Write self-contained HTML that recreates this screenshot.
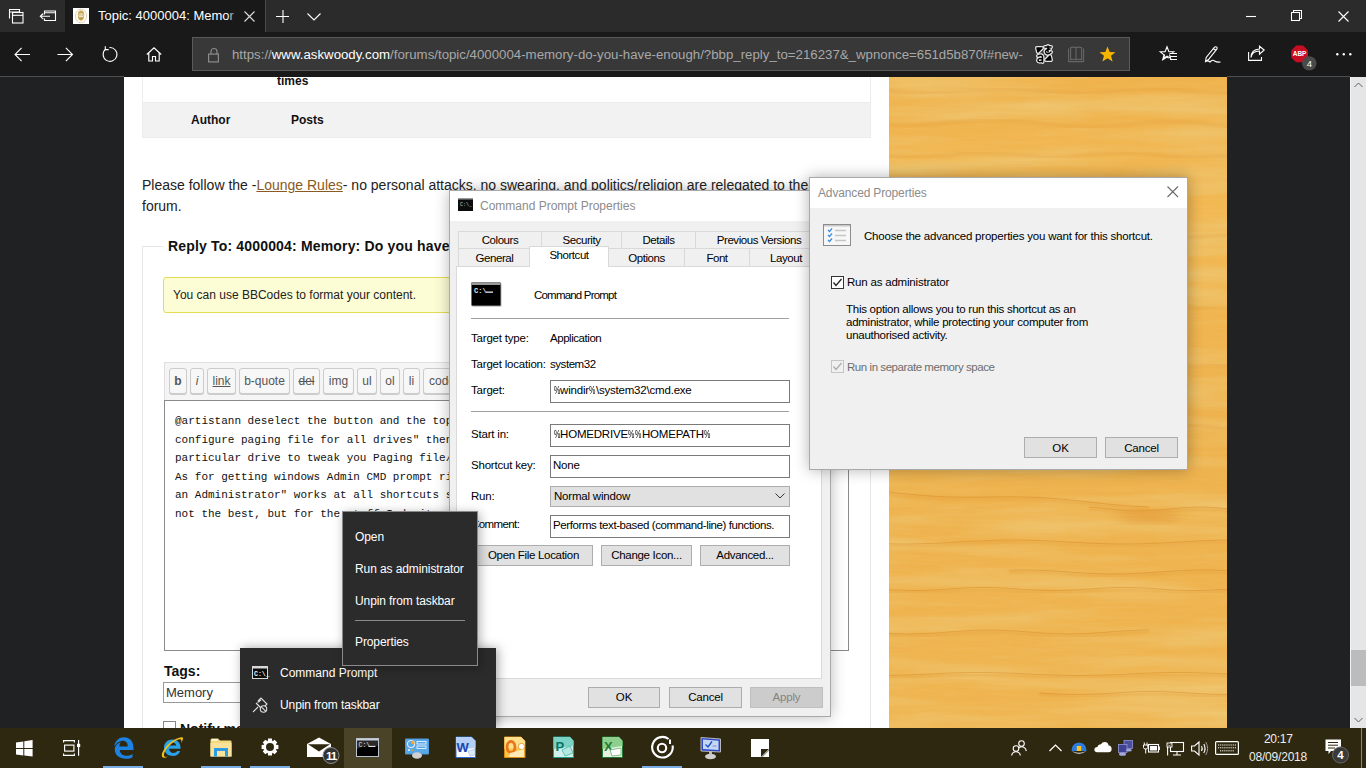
<!DOCTYPE html>
<html><head><meta charset="utf-8">
<style>
*{box-sizing:border-box;margin:0;padding:0}
html,body{width:1366px;height:768px;overflow:hidden;background:#202123;font-family:"Liberation Sans",sans-serif}
.a{position:absolute}
.t{position:absolute;white-space:pre;line-height:1}
svg{position:absolute;overflow:visible}
</style></head><body>

<!-- ===== TAB STRIP ===== -->
<div class="a" style="left:0;top:0;width:1366px;height:32px;background:#2b2b2b"></div>
<div class="a" style="left:65px;top:0;width:200px;height:32px;background:#191919"></div>
<div class="a" style="left:265px;top:0;width:1px;height:32px;background:#4a4a4a"></div>

<!-- ===== TOOLBAR ===== -->
<div class="a" style="left:0;top:32px;width:1366px;height:45px;background:#191919"></div>
<div class="a" style="left:192px;top:37px;width:938px;height:34px;background:#383838;border:1px solid #5a5a5a"></div>


<!-- chrome icons -->
<svg style="left:8px;top:8px" width="17" height="17"><path d="M1.5 10.5 V1.5 H11.5 V4.5 M1.5 4 H11.5" fill="none" stroke="#fff" stroke-width="1.1"/><rect x="4.5" y="4.5" width="10.5" height="10.5" fill="none" stroke="#fff" stroke-width="1.1"/><path d="M4.5 7.3 H15" stroke="#fff" stroke-width="1.1"/></svg>
<svg style="left:39px;top:10px" width="18" height="12"><path d="M5.5 4.5 V1 H16.5 V10.5 H5.5 V8.5 M5.5 2.8 H16.5" fill="none" stroke="#fff" stroke-width="1.1"/><path d="M11 6.3 H1.5 M4.3 3.5 L1.3 6.3 L4.3 9.1" fill="none" stroke="#fff" stroke-width="1.1"/></svg>
<div class="a" style="left:73px;top:8px;width:16px;height:16px;background:#fff"></div>
<svg style="left:73px;top:8px" width="16" height="16"><ellipse cx="8" cy="8" rx="5.6" ry="6.8" fill="none" stroke="#d2bf8e" stroke-width="0.7"/><path d="M4.8 6.5 Q5 2.8 8 2.6 Q11 2.8 11.2 6.5 Q11.3 10 10 11.8 Q8 13.8 6 11.8 Q4.7 10 4.8 6.5 Z" fill="#c9a652"/><path d="M5.5 6 Q8 4.5 10.5 6 V8.5 Q8 10.5 5.5 8.5 Z" fill="#efe2bd"/><path d="M6.3 7 h1.2 M8.6 7 h1.2 M7 10.2 h2" stroke="#9c7a2a" stroke-width="0.7"/></svg>
<div class="t" style="left:98px;top:9px;font-size:13px;color:#fff">Topic: 4000004: Memor</div>
<div class="a" style="left:227px;top:4px;width:12px;height:24px;background:linear-gradient(to right,rgba(25,25,25,0),#191919)"></div>
<svg style="left:244px;top:11px" width="11" height="11"><path d="M0.5 0.5 L10.5 10.5 M10.5 0.5 L0.5 10.5" stroke="#ddd" stroke-width="1.1"/></svg>
<svg style="left:276px;top:10px" width="14" height="14"><path d="M7 0 V13 M0 6.5 H13" stroke="#fff" stroke-width="1.1"/></svg>
<svg style="left:307px;top:13px" width="15" height="8"><polyline points="0.5,0.5 7,7 13.5,0.5" fill="none" stroke="#fff" stroke-width="1.1"/></svg>
<svg style="left:1246px;top:16px" width="11" height="2"><path d="M0 0.5 H10" stroke="#fff" stroke-width="1.1"/></svg>
<svg style="left:1291px;top:10px" width="12" height="12"><rect x="0.5" y="2.5" width="8" height="8" fill="none" stroke="#fff" stroke-width="1.05"/><path d="M2.5 2.5 V0.5 H10.5 V8.5 H8.5" fill="none" stroke="#fff" stroke-width="1.05"/></svg>
<svg style="left:1338px;top:11px" width="11" height="11"><path d="M0.5 0.5 L10.5 10.5 M10.5 0.5 L0.5 10.5" stroke="#fff" stroke-width="1.1"/></svg>

<svg style="left:14px;top:47px" width="17" height="16"><path d="M1 7.5 H16 M7.6 0.8 L1 7.5 L7.6 14.2" fill="none" stroke="#fff" stroke-width="1.1"/></svg>
<svg style="left:57px;top:47px" width="17" height="16"><path d="M0.5 7.5 H15.5 M8.9 0.8 L15.5 7.5 L8.9 14.2" fill="none" stroke="#fff" stroke-width="1.1"/></svg>
<svg style="left:102px;top:46px" width="17" height="17"><path d="M3.6 3.2 A6.9 6.9 0 1 0 7.5 1.6" fill="none" stroke="#fff" stroke-width="1.1"/><path d="M3.3 0.2 V3.6 H6.7" fill="none" stroke="#fff" stroke-width="1.1"/></svg>
<svg style="left:146px;top:47px" width="16" height="15"><path d="M0.8 7.5 L8 0.8 L15.2 7.5 M2.8 5.8 V14 H6.5 V9.5 H9.5 V14 H13.2 V5.8" fill="none" stroke="#fff" stroke-width="1.15"/></svg>

<svg style="left:208px;top:47px" width="12" height="16"><path d="M3 7 V4.5 A3 3 0 0 1 9 4.5 V7" fill="none" stroke="#8c8c8c" stroke-width="1.2"/><rect x="0.6" y="7.1" width="9.8" height="7.8" fill="none" stroke="#8c8c8c" stroke-width="1.2"/></svg>
<div class="t" style="left:232px;top:48px;font-size:13.25px;color:#a8a8a8">https://<span style="color:#fff">www.askwoody.com</span>/forums/topic/4000004-memory-do-you-have-enough/?bbp_reply_to=216237&amp;_wpnonce=651d5b870f#new-</div>

<svg style="left:1034px;top:44px" width="21" height="21"><g stroke="#e4e4e4" stroke-width="4" stroke-linejoin="round" stroke-linecap="round" fill="none">
<path d="M3 4 L8 4 L4 8 Z"/><path d="M17 16 L12 16 L16 12 Z"/><path d="M11 3 H17 M14 2 V8 M16 5 Q10 6 12 9 Q14 11 17 8"/><path d="M4 12 Q8 10 8.5 13 V18 M8.5 15 Q4 13.5 4 16.5 Q4.5 18.5 8.5 17"/></g>
<g stroke="#000" stroke-width="1.5" stroke-linejoin="round" stroke-linecap="round" fill="none">
<path d="M3 4 L8 4 L4 8 Z" fill="#000"/><path d="M17 16 L12 16 L16 12 Z" fill="#000"/><path d="M11 3 H17 M14 2 V8 M16 5 Q10 6 12 9 Q14 11 17 8"/><path d="M4 12 Q8 10 8.5 13 V18 M8.5 15 Q4 13.5 4 16.5 Q4.5 18.5 8.5 17"/></g></svg>
<svg style="left:1068px;top:46px" width="17" height="17"><path d="M0.6 2.5 V15.6 H15.6 V2.5" fill="none" stroke="#666" stroke-width="1.1"/><path d="M2.6 1.6 Q5.5 0.6 8 1.6 V13.6 Q5.5 12.8 2.6 13.6 Z M13.6 1.6 Q10.5 0.6 8 1.6 V13.6 Q10.5 12.8 13.6 13.6 Z" fill="none" stroke="#666" stroke-width="1.1"/></svg>
<svg style="left:1099px;top:46px" width="17" height="17"><path d="M8.5 0.5 L10.7 6 L16.5 6.2 L12 9.8 L13.6 15.6 L8.5 12.3 L3.4 15.6 L5 9.8 L0.5 6.2 L6.3 6 Z" fill="#f6b500"/></svg>

<svg style="left:1160px;top:46px" width="18" height="17"><path d="M7 0.8 L8.9 5.6 L13.8 5.8 L10 8.9 L11.3 13.8 L7 11 L2.7 13.8 L4 8.9 L0.2 5.8 L5.1 5.6 Z" fill="none" stroke="#fff" stroke-width="1.1"/><rect x="8.5" y="6.8" width="9.5" height="8" fill="#191919"/><path d="M9.5 7.5 H17 M10 10.5 H17 M10 13.5 H17" stroke="#fff" stroke-width="1.1"/><path d="M9.5 8.5 L10.6 12.3 L7 10.1 L3.6 12.3 L4.6 8.6" fill="none" stroke="#fff" stroke-width="1.1"/></svg>
<svg style="left:1204px;top:46px" width="17" height="18"><path d="M1.5 15.5 L2.2 11.5 L10.5 1.2 Q11.8 0.2 12.8 1.2 Q13.6 2.2 12.8 3.2 L4.5 13.5 Z M9.5 2.5 L11.8 4.5 M1.5 15.5 Q4 14 6 16 Q9 13 10.5 15 Q13 16.5 16.5 16" fill="none" stroke="#fff" stroke-width="1.1"/></svg>
<svg style="left:1248px;top:46px" width="17" height="15"><path d="M0.6 6 V14.4 H13.5 V11 M3 11.5 Q4 5 11.5 5 V8.2 L16.2 4 L11.5 0.2 V3 Q3 3.5 3 11.5 Z" fill="none" stroke="#fff" stroke-width="1.1"/></svg>
<svg style="left:1291px;top:45px" width="26" height="26"><path d="M5.1 0.5 H12.1 L17 5.4 V12.4 L12.1 17.3 H5.1 L0.2 12.4 V5.4 Z" fill="#c80e23"/><text x="8.6" y="11.3" font-family="Liberation Sans" font-size="6.5" font-weight="bold" fill="#fff" text-anchor="middle">ABP</text><circle cx="18.3" cy="18.4" r="7.2" fill="#4a4a4a"/><text x="18.3" y="21.8" font-family="Liberation Sans" font-size="9.5" fill="#fff" text-anchor="middle">4</text></svg>
<svg style="left:1336px;top:53px" width="17" height="3"><circle cx="1.3" cy="1.3" r="1.2" fill="#fff"/><circle cx="7.8" cy="1.3" r="1.2" fill="#fff"/><circle cx="14.3" cy="1.3" r="1.2" fill="#fff"/></svg>

<!-- ===== PAGE ===== -->
<div class="a" style="left:0;top:77px;width:1366px;height:651px;background:#202123"></div>
<div class="a" style="left:124px;top:77px;width:765px;height:651px;background:#fff"></div>
<div class="a" style="left:0;top:76px;width:124px;height:1px;background:#4e4e4e"></div><div class="a" style="left:1227px;top:76px;width:123px;height:1px;background:#4e4e4e"></div>
<svg style="left:889px;top:77px;overflow:hidden" width="338" height="651"><defs>
<filter id="wf" x="0" y="0" width="100%" height="100%"><feTurbulence type="fractalNoise" baseFrequency="0.005 0.05" numOctaves="4" seed="11"/><feColorMatrix type="matrix" values="0 0 0 0 0.86  0 0 0 0 0.55  0 0 0 0 0.15  2.2 0 0 0 -0.85"/></filter>
<filter id="wf2" x="0" y="0" width="100%" height="100%"><feTurbulence type="fractalNoise" baseFrequency="0.01 0.2" numOctaves="2" seed="3"/><feColorMatrix type="matrix" values="0 0 0 0 0.97  0 0 0 0 0.76  0 0 0 0 0.38  0 2.2 0 0 -1.1"/></filter>
<filter id="wf3" x="0" y="0" width="100%" height="100%"><feTurbulence type="fractalNoise" baseFrequency="0.04 0.6" numOctaves="2" seed="21"/><feColorMatrix type="matrix" values="0 0 0 0 0.85  0 0 0 0 0.55  0 0 0 0 0.2  1.6 0 0 0 -0.75"/></filter><filter id="wb0"><feGaussianBlur stdDeviation="0.35"/></filter><filter id="wb"><feGaussianBlur stdDeviation="1.2"/></filter><filter id="wb2"><feGaussianBlur stdDeviation="4"/></filter><linearGradient id="wg" x1="0" y1="0" x2="0" y2="1"><stop offset="0" stop-color="#efb24c"/><stop offset="0.2" stop-color="#f2b852"/><stop offset="0.5" stop-color="#eeb24d"/><stop offset="1" stop-color="#efb44f"/></linearGradient></defs>
<rect width="338" height="652" fill="url(#wg)"/>
<rect width="338" height="652" filter="url(#wf)"/>
<rect width="338" height="652" filter="url(#wf2)" opacity="0.08"/><rect width="338" height="652" filter="url(#wf3)" opacity="0.35"/><path d="M0 14.0 L10 14.8 L20 15.5 L30 15.9 L40 16.0 L50 15.7 L60 15.2 L70 14.4 L80 13.6 L90 12.8 L100 12.3 L110 12.0 L120 12.1 L130 12.5 L140 13.2 L150 14.0 L160 14.8 L170 15.5 L180 15.9 L190 16.0 L200 15.7 L210 15.2 L220 14.4 L230 13.6 L240 12.8 L250 12.3 L260 12.0 L270 12.1 L280 12.5 L290 13.2 L300 14.0 L310 14.8 L320 15.5 L330 15.9 L340 16.0" fill="none" stroke="#dc9330" stroke-width="4" opacity="0.2" filter="url(#wb)"/><path d="M0 47.6 L10 48.1 L20 48.2 L30 47.9 L40 47.3 L50 46.5 L60 45.6 L70 44.7 L80 43.9 L90 43.3 L100 43.0 L110 43.1 L120 43.6 L130 44.4 L140 45.4 L150 46.5 L160 47.6 L170 48.6 L180 49.4 L190 49.9 L200 50.0 L210 49.7 L220 49.1 L230 48.3 L240 47.4 L250 46.5 L260 45.7 L270 45.1 L280 44.8 L290 44.9 L300 45.4 L310 46.2 L320 47.2 L330 48.3 L340 49.4" fill="none" stroke="#dc9330" stroke-width="4" opacity="0.2" filter="url(#wb)"/><path d="M0 78.9 L10 79.6 L20 79.9 L30 79.9 L40 79.6 L50 78.9 L60 78.0 L70 77.1 L80 76.4 L90 76.1 L100 76.1 L110 76.4 L120 77.1 L130 78.0 L140 78.9 L150 79.6 L160 79.9 L170 79.9 L180 79.6 L190 78.9 L200 78.0 L210 77.1 L220 76.4 L230 76.1 L240 76.1 L250 76.4 L260 77.1 L270 78.0 L280 78.9 L290 79.6 L300 79.9 L310 79.9 L320 79.6 L330 78.9 L340 78.0" fill="none" stroke="#dc9330" stroke-width="4" opacity="0.2" filter="url(#wb)"/><path d="M0 160.0 L10 160.6 L20 161.2 L30 161.6 L40 161.9 L50 162.0 L60 161.9 L70 161.6 L80 161.2 L90 160.6 L100 160.0 L110 159.4 L120 158.8 L130 158.4 L140 158.1 L150 158.0 L160 158.1 L170 158.4 L180 158.8 L190 159.4 L200 160.0 L210 160.6 L220 161.2 L230 161.6 L240 161.9 L250 162.0 L260 161.9 L270 161.6 L280 161.2 L290 160.6 L300 160.0 L310 159.4 L320 158.8 L330 158.4 L340 158.1" fill="none" stroke="#dc9330" stroke-width="4" opacity="0.2" filter="url(#wb)"/><path d="M0 232.0 L10 231.9 L20 231.6 L30 231.1 L40 230.4 L50 229.6 L60 228.9 L70 228.4 L80 228.1 L90 228.0 L100 228.2 L110 228.7 L120 229.3 L130 230.0 L140 230.7 L150 231.3 L160 231.8 L170 232.0 L180 231.9 L190 231.6 L200 231.1 L210 230.4 L220 229.6 L230 228.9 L240 228.4 L250 228.1 L260 228.0 L270 228.2 L280 228.7 L290 229.3 L300 230.0 L310 230.7 L320 231.3 L330 231.8 L340 232.0" fill="none" stroke="#dc9330" stroke-width="4" opacity="0.2" filter="url(#wb)"/><path d="M0 291.2 L10 291.7 L20 291.9 L30 292.0 L40 291.8 L50 291.5 L60 291.0 L70 290.3 L80 289.7 L90 289.0 L100 288.5 L110 288.2 L120 288.0 L130 288.1 L140 288.3 L150 288.8 L160 289.4 L170 290.0 L180 290.6 L190 291.2 L200 291.7 L210 291.9 L220 292.0 L230 291.8 L240 291.5 L250 291.0 L260 290.3 L270 289.7 L280 289.0 L290 288.5 L300 288.2 L310 288.0 L320 288.1 L330 288.3 L340 288.8" fill="none" stroke="#dc9330" stroke-width="4" opacity="0.2" filter="url(#wb)"/><path d="M0 350.0 L10 350.8 L20 351.4 L30 351.8 L40 352.0 L50 351.8 L60 351.4 L70 350.8 L80 350.0 L90 349.2 L100 348.6 L110 348.2 L120 348.0 L130 348.2 L140 348.6 L150 349.2 L160 350.0 L170 350.8 L180 351.4 L190 351.8 L200 352.0 L210 351.8 L220 351.4 L230 350.8 L240 350.0 L250 349.2 L260 348.6 L270 348.2 L280 348.0 L290 348.2 L300 348.6 L310 349.2 L320 350.0 L330 350.8 L340 351.4" fill="none" stroke="#dc9330" stroke-width="4" opacity="0.2" filter="url(#wb)"/><path d="M0 415.0 L10 416.1 L20 417.2 L30 418.1 L40 418.9 L50 419.5 L60 419.9 L70 420.1 L80 420.2 L90 420.1 L100 420.0 L110 419.9 L120 419.8 L130 419.9 L140 420.1 L150 420.5 L160 421.1 L170 421.9 L180 422.8 L190 423.9 L200 425.0 L210 426.1 L220 427.2 L230 428.1 L240 428.9 L250 429.5 L260 429.9" fill="none" stroke="#d2801f" stroke-width="1" opacity="0.4" filter="url(#wb0)"/><path d="M0 417.0 L10 418.1 L20 419.2 L30 420.1 L40 420.9 L50 421.5 L60 421.9 L70 422.1 L80 422.2 L90 422.1 L100 422.0 L110 421.9 L120 421.8 L130 421.9 L140 422.1 L150 422.5 L160 423.1 L170 423.9 L180 424.8 L190 425.9 L200 427.0 L210 428.1 L220 429.2 L230 430.1 L240 430.9 L250 431.5 L260 431.9" fill="none" stroke="#e09a35" stroke-width="3" opacity="0.3" filter="url(#wb)"/><path d="M200 430.3 L210 431.0 L220 432.0 L230 433.0 L240 433.7 L250 434.0 L260 433.7 L270 433.0 L280 432.0 L290 431.0 L300 430.3 L310 430.0 L320 430.3 L330 431.0 L340 432.0" fill="none" stroke="#d2801f" stroke-width="1" opacity="0.4" filter="url(#wb0)"/><path d="M200 432.3 L210 433.0 L220 434.0 L230 435.0 L240 435.7 L250 436.0 L260 435.7 L270 435.0 L280 434.0 L290 433.0 L300 432.3 L310 432.0 L320 432.3 L330 433.0 L340 434.0" fill="none" stroke="#e09a35" stroke-width="3" opacity="0.3" filter="url(#wb)"/><path d="M0 466.8 L10 467.0 L20 467.0 L30 466.8 L40 466.5 L50 466.1 L60 465.6 L70 465.0 L80 464.4 L90 463.9 L100 463.5 L110 463.2 L120 463.0 L130 463.0 L140 463.2 L150 463.5 L160 463.9 L170 464.4 L180 465.0 L190 465.6 L200 466.1 L210 466.5 L220 466.8 L230 467.0 L240 467.0 L250 466.8 L260 466.5 L270 466.1 L280 465.6 L290 465.0 L300 464.4 L310 463.9 L320 463.5 L330 463.2 L340 463.0" fill="none" stroke="#d2801f" stroke-width="1" opacity="0.4" filter="url(#wb0)"/><path d="M0 468.8 L10 469.0 L20 469.0 L30 468.8 L40 468.5 L50 468.1 L60 467.6 L70 467.0 L80 466.4 L90 465.9 L100 465.5 L110 465.2 L120 465.0 L130 465.0 L140 465.2 L150 465.5 L160 465.9 L170 466.4 L180 467.0 L190 467.6 L200 468.1 L210 468.5 L220 468.8 L230 469.0 L240 469.0 L250 468.8 L260 468.5 L270 468.1 L280 467.6 L290 467.0 L300 466.4 L310 465.9 L320 465.5 L330 465.2 L340 465.0" fill="none" stroke="#e09a35" stroke-width="3" opacity="0.3" filter="url(#wb)"/><path d="M120 493.3 L130 493.0 L140 493.0 L150 493.3 L160 493.7 L170 494.3 L180 495.0 L190 495.7 L200 496.3 L210 496.7 L220 497.0 L230 497.0 L240 496.7 L250 496.3 L260 495.7 L270 495.0 L280 494.3 L290 493.7 L300 493.3 L310 493.0 L320 493.0 L330 493.3 L340 493.7" fill="none" stroke="#d2801f" stroke-width="1" opacity="0.4" filter="url(#wb0)"/><path d="M120 495.3 L130 495.0 L140 495.0 L150 495.3 L160 495.7 L170 496.3 L180 497.0 L190 497.7 L200 498.3 L210 498.7 L220 499.0 L230 499.0 L240 498.7 L250 498.3 L260 497.7 L270 497.0 L280 496.3 L290 495.7 L300 495.3 L310 495.0 L320 495.0 L330 495.3 L340 495.7" fill="none" stroke="#e09a35" stroke-width="3" opacity="0.3" filter="url(#wb)"/><path d="M0 556.4 L10 556.8 L20 557.0 L30 556.8 L40 556.4 L50 555.8 L60 555.0 L70 554.2 L80 553.6 L90 553.2 L100 553.0 L110 553.2 L120 553.6 L130 554.2 L140 555.0 L150 555.8 L160 556.4 L170 556.8 L180 557.0 L190 556.8 L200 556.4 L210 555.8 L220 555.0 L230 554.2 L240 553.6 L250 553.2 L260 553.0" fill="none" stroke="#d2801f" stroke-width="1" opacity="0.4" filter="url(#wb0)"/><path d="M0 558.4 L10 558.8 L20 559.0 L30 558.8 L40 558.4 L50 557.8 L60 557.0 L70 556.2 L80 555.6 L90 555.2 L100 555.0 L110 555.2 L120 555.6 L130 556.2 L140 557.0 L150 557.8 L160 558.4 L170 558.8 L180 559.0 L190 558.8 L200 558.4 L210 557.8 L220 557.0 L230 556.2 L240 555.6 L250 555.2 L260 555.0" fill="none" stroke="#e09a35" stroke-width="3" opacity="0.3" filter="url(#wb)"/><path d="M0 598.4 L10 598.2 L20 597.9 L30 597.5 L40 597.0 L50 596.5 L60 596.1 L70 595.8 L80 595.6 L90 595.5 L100 595.6 L110 595.8 L120 596.1 L130 596.5 L140 597.0 L150 597.5 L160 597.9 L170 598.2 L180 598.4 L190 598.5 L200 598.4 L210 598.2 L220 597.9 L230 597.5 L240 597.0 L250 596.5 L260 596.1 L270 595.8 L280 595.6 L290 595.5 L300 595.6 L310 595.8 L320 596.1 L330 596.5 L340 597.0" fill="none" stroke="#d2801f" stroke-width="1" opacity="0.4" filter="url(#wb0)"/><path d="M0 600.4 L10 600.2 L20 599.9 L30 599.5 L40 599.0 L50 598.5 L60 598.1 L70 597.8 L80 597.6 L90 597.5 L100 597.6 L110 597.8 L120 598.1 L130 598.5 L140 599.0 L150 599.5 L160 599.9 L170 600.2 L180 600.4 L190 600.5 L200 600.4 L210 600.2 L220 599.9 L230 599.5 L240 599.0 L250 598.5 L260 598.1 L270 597.8 L280 597.6 L290 597.5 L300 597.6 L310 597.8 L320 598.1 L330 598.5 L340 599.0" fill="none" stroke="#e09a35" stroke-width="3" opacity="0.3" filter="url(#wb)"/><path d="M150 616.0 L160 616.6 L170 617.1 L180 617.4 L190 617.5 L200 617.3 L210 616.9 L220 616.3 L230 615.7 L240 615.1 L250 614.7 L260 614.5 L270 614.6 L280 614.9 L290 615.4 L300 616.0 L310 616.6 L320 617.1 L330 617.4 L340 617.5" fill="none" stroke="#d2801f" stroke-width="1" opacity="0.4" filter="url(#wb0)"/><path d="M150 618.0 L160 618.6 L170 619.1 L180 619.4 L190 619.5 L200 619.3 L210 618.9 L220 618.3 L230 617.7 L240 617.1 L250 616.7 L260 616.5 L270 616.6 L280 616.9 L290 617.4 L300 618.0 L310 618.6 L320 619.1 L330 619.4 L340 619.5" fill="none" stroke="#e09a35" stroke-width="3" opacity="0.3" filter="url(#wb)"/><path d="M0 512.7 L10 513.2 L20 513.5 L30 513.5 L40 513.2 L50 512.7 L60 512.0 L70 511.3 L80 510.8 L90 510.5 L100 510.5 L110 510.8 L120 511.3 L130 512.0 L140 512.7 L150 513.2 L160 513.5 L170 513.5 L180 513.2 L190 512.7 L200 512.0 L210 511.3 L220 510.8 L230 510.5 L240 510.5 L250 510.8 L260 511.3 L270 512.0 L280 512.7 L290 513.2 L300 513.5 L310 513.5 L320 513.2 L330 512.7 L340 512.0" fill="none" stroke="#d2801f" stroke-width="1" opacity="0.4" filter="url(#wb0)"/><path d="M0 514.7 L10 515.2 L20 515.5 L30 515.5 L40 515.2 L50 514.7 L60 514.0 L70 513.3 L80 512.8 L90 512.5 L100 512.5 L110 512.8 L120 513.3 L130 514.0 L140 514.7 L150 515.2 L160 515.5 L170 515.5 L180 515.2 L190 514.7 L200 514.0 L210 513.3 L220 512.8 L230 512.5 L240 512.5 L250 512.8 L260 513.3 L270 514.0 L280 514.7 L290 515.2 L300 515.5 L310 515.5 L320 515.2 L330 514.7 L340 514.0" fill="none" stroke="#e09a35" stroke-width="3" opacity="0.3" filter="url(#wb)"/><ellipse cx="260" cy="440" rx="32" ry="6" fill="#d98a2a" opacity="0.35" filter="url(#wb2)"/>
</svg>
<div class="a" style="left:1350px;top:77px;width:16px;height:651px;background:#e6e6e6;border-left:1px solid #f4f4f4"></div>
<svg style="left:1354px;top:82px" width="9" height="6"><polyline points="0.5,5 4.5,1 8.5,5" fill="none" stroke="#606060" stroke-width="1"/></svg>
<div class="a" style="left:1351px;top:650px;width:15px;height:36px;background:#bcbcbc"></div>
<svg style="left:1354px;top:717px" width="9" height="6"><polyline points="0.5,1 4.5,5 8.5,1" fill="none" stroke="#606060" stroke-width="1"/></svg>


<!-- page content -->
<div class="t" style="left:277px;top:75px;font-size:12px;font-weight:bold;color:#111">times</div>
<div class="a" style="left:142px;top:77px;width:729px;height:25px;border:1px solid #ededed;border-top:none;border-bottom:none"></div>
<div class="a" style="left:142px;top:102px;width:729px;height:36px;background:#f2f2f2;border:1px solid #ececec"></div>
<div class="t" style="left:191px;top:114px;font-size:12px;font-weight:bold;color:#111">Author</div>
<div class="t" style="left:291px;top:114px;font-size:12px;font-weight:bold;color:#111">Posts</div>

<div class="t" style="left:142px;top:175px;font-size:14px;color:#222;line-height:21px">Please follow the -<span style="color:#8a5a22;text-decoration:underline">Lounge Rules</span>- no personal attacks, no swearing, and politics/religion are relegated to the
forum.</div>

<div class="a" style="left:142px;top:246px;width:729px;height:482px;border:1px solid #e6e6e6;border-bottom:none"></div>
<div class="a" style="left:163px;top:236px;width:295px;height:20px;background:#fff"></div>
<div class="t" style="left:168px;top:239px;font-size:14px;font-weight:bold;color:#111;letter-spacing:0.17px">Reply To: 4000004: Memory: Do you have enough?</div>

<div class="a" style="left:163px;top:277px;width:700px;height:36px;background:#fdfdd5;border:1px solid #e6db55;border-radius:3px"></div>
<div class="t" style="left:173px;top:289px;font-size:12px;color:#222">You can use BBCodes to format your content.</div>

<!-- editor toolbar -->
<div class="a" style="left:164px;top:362px;width:684px;height:39px;background:#f5f5f5;border:1px solid #e0e0e0;border-bottom:none"></div>
<div class="a" style="left:169px;top:368px;width:18px;height:26px;background:#f7f7f7;border:1px solid #ccc;border-radius:3px;box-shadow:0 1px 0 #ccc;font-size:12px;color:#555;text-align:center;line-height:24px;font-weight:bold;">b</div>
<div class="a" style="left:190px;top:368px;width:14px;height:26px;background:#f7f7f7;border:1px solid #ccc;border-radius:3px;box-shadow:0 1px 0 #ccc;font-size:12px;color:#555;text-align:center;line-height:24px;font-style:italic;">i</div>
<div class="a" style="left:207px;top:368px;width:29px;height:26px;background:#f7f7f7;border:1px solid #ccc;border-radius:3px;box-shadow:0 1px 0 #ccc;font-size:12px;color:#555;text-align:center;line-height:24px;text-decoration:underline;">link</div>
<div class="a" style="left:239px;top:368px;width:51px;height:26px;background:#f7f7f7;border:1px solid #ccc;border-radius:3px;box-shadow:0 1px 0 #ccc;font-size:12px;color:#555;text-align:center;line-height:24px;">b-quote</div>
<div class="a" style="left:293px;top:368px;width:27px;height:26px;background:#f7f7f7;border:1px solid #ccc;border-radius:3px;box-shadow:0 1px 0 #ccc;font-size:12px;color:#555;text-align:center;line-height:24px;text-decoration:line-through;">del</div>
<div class="a" style="left:323px;top:368px;width:31px;height:26px;background:#f7f7f7;border:1px solid #ccc;border-radius:3px;box-shadow:0 1px 0 #ccc;font-size:12px;color:#555;text-align:center;line-height:24px;">img</div>
<div class="a" style="left:357px;top:368px;width:20px;height:26px;background:#f7f7f7;border:1px solid #ccc;border-radius:3px;box-shadow:0 1px 0 #ccc;font-size:12px;color:#555;text-align:center;line-height:24px;">ul</div>
<div class="a" style="left:380px;top:368px;width:20px;height:26px;background:#f7f7f7;border:1px solid #ccc;border-radius:3px;box-shadow:0 1px 0 #ccc;font-size:12px;color:#555;text-align:center;line-height:24px;">ol</div>
<div class="a" style="left:403px;top:368px;width:17px;height:26px;background:#f7f7f7;border:1px solid #ccc;border-radius:3px;box-shadow:0 1px 0 #ccc;font-size:12px;color:#555;text-align:center;line-height:24px;">li</div>
<div class="a" style="left:423px;top:368px;width:38px;height:26px;background:#f7f7f7;border:1px solid #ccc;border-radius:3px;box-shadow:0 1px 0 #ccc;font-size:12px;color:#555;text-align:center;line-height:24px;">code</div>
<div class="a" style="left:473px;top:368px;width:47px;height:26px;background:#f7f7f7;border:1px solid #ccc;border-radius:3px;box-shadow:0 1px 0 #ccc;font-size:12px;color:#555;text-align:center;line-height:24px;">close</div>

<!-- textarea -->
<div class="a" style="left:164px;top:400px;width:685px;height:251px;background:#fff;border:1px solid #8a8a8a"></div>
<div class="t" style="left:175px;top:412px;font-family:'Liberation Mono',monospace;font-size:11px;line-height:18.6px;color:#111">@artistann deselect the button and the top "Automatically manage
configure paging file for all drives" then select the
particular drive to tweak you Paging file/
As for getting windows Admin CMD prompt right-click "Run as
an Administrator" works at all shortcuts so far
not the best, but for the stuff I do it works</div>

<div class="t" style="left:164px;top:664px;font-size:14px;font-weight:bold;color:#111">Tags:</div>
<div class="a" style="left:163px;top:682px;width:300px;height:21px;background:#fff;border:1px solid #999"></div>
<div class="t" style="left:166px;top:686px;font-size:13px;color:#333">Memory</div>
<div class="a" style="left:163px;top:721px;width:13px;height:13px;background:#fff;border:1px solid #888"></div>
<div class="t" style="left:180px;top:722px;font-size:14px;font-weight:bold;color:#111">Notify me of follow-up replies via email</div>


<!-- ===== CMD PROPERTIES DIALOG ===== -->
<div class="a" style="left:449px;top:190px;width:382px;height:527px;background:#f0f0f0;border:1px solid #a9a9a9;box-shadow:0 0 14px rgba(0,0,0,0.28)"></div>
<div class="a" style="left:450px;top:191px;width:380px;height:30px;background:#fff"></div>
<svg style="left:458px;top:198px" width="15" height="13"><rect x="0" y="0" width="15" height="13" fill="#0c0c0c"/><rect x="0" y="0" width="15" height="1.5" fill="#999"/><text x="2" y="8" font-family="Liberation Mono" font-size="5" fill="#ccc">C:\_</text></svg>
<div class="t" style="left:480px;top:200px;font-size:12px;color:#8c8c8c">Command Prompt Properties</div>

<!-- tab panel -->
<div class="a" style="left:456px;top:266px;width:366px;height:413px;background:#fff;border:1px solid #d9d9d9"></div>
<div class="a" style="left:458px;top:231px;width:84px;height:18px;background:#f0f0f0;border:1px solid #d9d9d9;font-size:11.5px;letter-spacing:-0.45px;color:#000;text-align:center;line-height:16px">Colours</div>
<div class="a" style="left:541px;top:231px;width:81px;height:18px;background:#f0f0f0;border:1px solid #d9d9d9;font-size:11.5px;letter-spacing:-0.45px;color:#000;text-align:center;line-height:16px">Security</div>
<div class="a" style="left:621px;top:231px;width:75px;height:18px;background:#f0f0f0;border:1px solid #d9d9d9;font-size:11.5px;letter-spacing:-0.45px;color:#000;text-align:center;line-height:16px">Details</div>
<div class="a" style="left:695px;top:231px;width:128px;height:18px;background:#f0f0f0;border:1px solid #d9d9d9;font-size:11.5px;letter-spacing:-0.45px;color:#000;text-align:center;line-height:16px">Previous Versions</div>
<div class="a" style="left:458px;top:248px;width:73px;height:19px;background:#f0f0f0;border:1px solid #d9d9d9;font-size:11.5px;letter-spacing:-0.45px;color:#000;text-align:center;line-height:19px">General</div>
<div class="a" style="left:608px;top:248px;width:77px;height:19px;background:#f0f0f0;border:1px solid #d9d9d9;font-size:11.5px;letter-spacing:-0.45px;color:#000;text-align:center;line-height:19px">Options</div>
<div class="a" style="left:684px;top:248px;width:66px;height:19px;background:#f0f0f0;border:1px solid #d9d9d9;font-size:11.5px;letter-spacing:-0.45px;color:#000;text-align:center;line-height:19px">Font</div>
<div class="a" style="left:749px;top:248px;width:74px;height:19px;background:#f0f0f0;border:1px solid #d9d9d9;font-size:11.5px;letter-spacing:-0.45px;color:#000;text-align:center;line-height:19px">Layout</div>
<div class="a" style="left:529px;top:246px;width:80px;height:21px;background:#fff;border:1px solid #d9d9d9;border-bottom:none;font-size:11.5px;letter-spacing:-0.45px;text-align:center;line-height:17px;color:#000">Shortcut</div>

<svg style="left:471px;top:282px" width="31" height="25"><defs><filter id="sh" x="-20%" y="-20%" width="140%" height="140%"><feDropShadow dx="0.6" dy="0.8" stdDeviation="0.7" flood-opacity="0.5"/></filter></defs><rect x="0.5" y="0.5" width="29" height="23" fill="#050505" filter="url(#sh)"/><rect x="0.5" y="0.5" width="29" height="2.5" fill="#9a9a9a"/><text x="3" y="11" font-family="Liberation Mono" font-size="7" font-weight="bold" fill="#e6e6e6">C:\</text><rect x="15" y="9.5" width="7" height="1.3" fill="#e6e6e6"/></svg>
<div class="t" style="left:534px;top:290px;font-size:11.5px;letter-spacing:-0.8px;color:#000">Command Prompt</div>
<div class="a" style="left:471px;top:318px;width:318px;height:1px;background:#a0a0a0"></div>
<div class="t" style="left:471px;top:333px;font-size:11.5px;letter-spacing:-0.2px;color:#000">Target type:</div>
<div class="t" style="left:550px;top:333px;font-size:11.5px;letter-spacing:-0.45px;color:#000">Application</div>
<div class="t" style="left:471px;top:359px;font-size:11.5px;letter-spacing:-0.2px;color:#000">Target location:</div>
<div class="t" style="left:550px;top:359px;font-size:11.5px;letter-spacing:-0.45px;color:#000">system32</div>
<div class="t" style="left:471px;top:385px;font-size:11.5px;letter-spacing:-0.2px;color:#000">Target:</div>
<div class="a" style="left:550px;top:380px;width:240px;height:23px;background:#fff;border:1px solid #7a7a7a"></div>
<div class="t" style="left:553px;top:385px;font-size:11.5px;letter-spacing:-0.2px;color:#000"><span style="display:inline-block;transform:scaleX(0.62);margin:0 -1.5px">%</span>windir<span style="display:inline-block;transform:scaleX(0.62);margin:0 -1.5px">%</span>\system32\cmd.exe</div>
<div class="a" style="left:471px;top:411px;width:318px;height:1px;background:#a0a0a0"></div>
<div class="t" style="left:471px;top:429px;font-size:11.5px;letter-spacing:-0.2px;color:#000">Start in:</div>
<div class="a" style="left:550px;top:424px;width:240px;height:23px;background:#fff;border:1px solid #7a7a7a"></div>
<div class="t" style="left:553px;top:429px;font-size:11.5px;letter-spacing:-0.2px;color:#000"><span style="display:inline-block;transform:scaleX(0.62);margin:0 -1.5px">%</span>HOMEDRIVE<span style="display:inline-block;transform:scaleX(0.62);margin:0 -1.5px">%</span><span style="display:inline-block;transform:scaleX(0.62);margin:0 -1.5px">%</span>HOMEPATH<span style="display:inline-block;transform:scaleX(0.62);margin:0 -1.5px">%</span></div>
<div class="t" style="left:471px;top:460px;font-size:11.5px;letter-spacing:-0.2px;color:#000">Shortcut key:</div>
<div class="a" style="left:550px;top:455px;width:240px;height:23px;background:#fff;border:1px solid #7a7a7a"></div>
<div class="t" style="left:553px;top:460px;font-size:11.5px;letter-spacing:-0.2px;color:#000">None</div>
<div class="t" style="left:471px;top:491px;font-size:11.5px;letter-spacing:-0.2px;color:#000">Run:</div>
<div class="a" style="left:550px;top:486px;width:240px;height:21px;background:#e1e1e1;border:1px solid #adadad"></div>
<div class="t" style="left:554px;top:491px;font-size:11.5px;letter-spacing:-0.2px;color:#000">Normal window</div>
<svg style="left:775px;top:493px" width="10" height="6"><polyline points="0.5,0.5 5,5 9.5,0.5" fill="none" stroke="#333" stroke-width="1"/></svg>
<div class="t" style="left:471px;top:519px;font-size:11.5px;letter-spacing:-0.6px;color:#000">Comment:</div>
<div class="a" style="left:550px;top:515px;width:240px;height:23px;background:#fff;border:1px solid #7a7a7a"></div>
<div class="t" style="left:553px;top:520px;font-size:11.5px;letter-spacing:-0.4px;color:#000">Performs text-based (command-line) functions.</div>
<div class="a" style="left:474px;top:545px;width:119px;height:21px;background:#e1e1e1;border:1px solid #adadad"></div>
<div class="t" style="left:474px;top:550px;width:119px;text-align:center;font-size:11.5px;letter-spacing:-0.3px;color:#000">Open File Location</div>
<div class="a" style="left:601px;top:545px;width:91px;height:21px;background:#e1e1e1;border:1px solid #adadad"></div>
<div class="t" style="left:601px;top:550px;width:91px;text-align:center;font-size:11.5px;letter-spacing:-0.3px;color:#000">Change Icon...</div>
<div class="a" style="left:700px;top:545px;width:90px;height:21px;background:#e1e1e1;border:1px solid #adadad"></div>
<div class="t" style="left:700px;top:550px;width:90px;text-align:center;font-size:11.5px;letter-spacing:-0.3px;color:#000">Advanced...</div>

<div class="a" style="left:588px;top:687px;width:72px;height:21px;background:#e1e1e1;border:1px solid #adadad"></div>
<div class="t" style="left:588px;top:692px;width:72px;text-align:center;font-size:11.5px;color:#000">OK</div>
<div class="a" style="left:669px;top:687px;width:73px;height:21px;background:#e1e1e1;border:1px solid #adadad"></div>
<div class="t" style="left:669px;top:692px;width:73px;text-align:center;font-size:11.5px;letter-spacing:-0.2px;color:#000">Cancel</div>
<div class="a" style="left:750px;top:687px;width:73px;height:21px;background:#cccccc;border:1px solid #bfbfbf"></div>
<div class="t" style="left:750px;top:692px;width:73px;text-align:center;font-size:11.5px;letter-spacing:-0.2px;color:#838383">Apply</div>


<!-- ===== ADVANCED PROPERTIES ===== -->
<div class="a" style="left:809px;top:177px;width:379px;height:293px;background:#f0f0f0;border:1px solid #a9a9a9;box-shadow:0 0 14px rgba(0,0,0,0.3)"></div>
<div class="a" style="left:810px;top:178px;width:377px;height:30px;background:#fff"></div>
<div class="t" style="left:818px;top:187px;font-size:12px;letter-spacing:-0.15px;color:#8c8c8c">Advanced Properties</div>
<svg style="left:1167px;top:186px" width="12" height="12"><path d="M0.5 0.5 L11 11 M11 0.5 L0.5 11" stroke="#6a6a6a" stroke-width="1.1"/></svg>
<svg style="left:823px;top:224px" width="28" height="22"><rect x="0.5" y="0.5" width="27" height="21" fill="#f7f7f7" stroke="#8c8c8c"/><rect x="1" y="1" width="26" height="1.5" fill="#c8c8c8"/>
<path d="M5 6 l1.5 1.5 l2.5 -3 M5 11 l1.5 1.5 l2.5 -3 M5 16 l1.5 1.5 l2.5 -3" stroke="#3a8ee6" stroke-width="1.3" fill="none"/>
<path d="M12 6.5 h11 M12 11.5 h11 M12 16.5 h11" stroke="#c5c5c5" stroke-width="1.3"/></svg>
<div class="t" style="left:864px;top:231px;font-size:11.5px;letter-spacing:-0.2px;color:#000">Choose the advanced properties you want for this shortcut.</div>
<div class="a" style="left:831px;top:276px;width:13px;height:13px;background:#fff;border:1px solid #333"></div>
<svg style="left:832px;top:277px" width="11" height="11"><polyline points="1.5,5.5 4,8.5 9.5,2" fill="none" stroke="#222" stroke-width="1.3"/></svg>
<div class="t" style="left:847px;top:277px;font-size:11.5px;letter-spacing:-0.2px;color:#000">Run as administrator</div>
<div class="t" style="left:846px;top:303px;font-size:11.5px;letter-spacing:-0.26px;line-height:13px;color:#000">This option allows you to run this shortcut as an
administrator, while protecting your computer from
unauthorised activity.</div>
<div class="a" style="left:831px;top:360px;width:13px;height:13px;background:#f0f0f0;border:1px solid #c5c5c5"></div>
<svg style="left:832px;top:361px" width="11" height="11"><polyline points="1.5,5.5 4,8.5 9.5,2" fill="none" stroke="#aaa" stroke-width="1.2"/></svg>
<div class="t" style="left:847px;top:362px;font-size:11.5px;letter-spacing:-0.44px;color:#6d6d6d">Run in separate memory space</div>
<div class="a" style="left:1024px;top:437px;width:73px;height:21px;background:#e1e1e1;border:1px solid #adadad"></div>
<div class="t" style="left:1024px;top:443px;width:73px;text-align:center;font-size:11.5px;color:#000">OK</div>
<div class="a" style="left:1105px;top:437px;width:73px;height:21px;background:#e1e1e1;border:1px solid #adadad"></div>
<div class="t" style="left:1105px;top:443px;width:73px;text-align:center;font-size:11.5px;letter-spacing:-0.2px;color:#000">Cancel</div>

<!-- ===== JUMP LIST ===== -->
<div class="a" style="left:240px;top:648px;width:256px;height:80px;background:#2b2b2b;box-shadow:2px 0 10px rgba(0,0,0,0.35)"></div>
<svg style="left:252px;top:666px" width="16" height="13"><rect x="0.5" y="0.5" width="15" height="12" fill="#0a0a0a" stroke="#d8d8d8" stroke-width="1"/><rect x="1" y="1" width="14" height="1.5" fill="#d8d8d8"/><text x="2" y="10" font-family="Liberation Mono" font-size="6.5" font-weight="bold" fill="#f0f0f0">C:\_</text></svg>
<div class="t" style="left:280px;top:667px;font-size:12px;color:#fff">Command Prompt</div>
<svg style="left:252px;top:697px" width="16" height="16"><path d="M1 15 L6 10 M4 6 L10 12 M6 4 L9 1 L15 7 L12 10 M5.5 5.5 L9 3" fill="none" stroke="#e0e0e0" stroke-width="1.1"/><circle cx="11.5" cy="12" r="3.2" fill="#2b2b2b" stroke="#e0e0e0" stroke-width="1.1"/><path d="M9.3 9.8 L13.7 14.2" stroke="#e0e0e0" stroke-width="1.1"/></svg>
<div class="t" style="left:280px;top:699px;font-size:12px;letter-spacing:-0.1px;color:#fff">Unpin from taskbar</div>

<!-- ===== CONTEXT MENU ===== -->
<div class="a" style="left:342px;top:511px;width:136px;height:155px;background:#2b2b2b;border:1px solid #8a8a8a;box-shadow:2px 2px 10px rgba(0,0,0,0.3)"></div>
<div class="t" style="left:355px;top:531px;font-size:12px;letter-spacing:-0.1px;color:#fff">Open</div>
<div class="t" style="left:355px;top:563px;font-size:12px;letter-spacing:-0.1px;color:#fff">Run as administrator</div>
<div class="t" style="left:355px;top:595px;font-size:12px;letter-spacing:-0.1px;color:#fff">Unpin from taskbar</div>
<div class="a" style="left:355px;top:620px;width:110px;height:1px;background:#8a8a8a"></div>
<div class="t" style="left:355px;top:636px;font-size:12px;letter-spacing:-0.1px;color:#fff">Properties</div>

<!-- ===== TASKBAR ===== -->
<div class="a" style="left:0;top:728px;width:1366px;height:40px;background:#2f2811"></div>


<!-- taskbar content -->
<svg style="left:16px;top:740px" width="17" height="17"><path d="M0 2.4 L7.3 1.4 V7.9 H0 Z M8.3 1.3 L16.6 0.1 V7.9 H8.3 Z M0 8.9 H7.3 V15.4 L0 14.4 Z M8.3 8.9 H16.6 V16.6 L8.3 15.5 Z" fill="#fff"/></svg>
<svg style="left:63px;top:740px" width="18" height="16"><path d="M0.6 2.6 V0.6 H11.4 V2.6 M0.6 13.4 V15.4 H11.4 V13.4" fill="none" stroke="#fff" stroke-width="1.15"/><rect x="1.6" y="5.1" width="9.3" height="6" fill="none" stroke="#fff" stroke-width="1.15"/><path d="M15.6 0 V15.8" stroke="#fff" stroke-width="1.15"/><rect x="14" y="3.8" width="3.2" height="3.2" fill="#fff"/></svg>
<!-- edge -->
<svg style="left:113px;top:737px" width="21" height="22"><path d="M1.2 9.5 C2 3.5 6.5 0.3 11 0.3 C16.8 0.3 20.5 4.3 20.5 11.2 V13 H6.8 C7 17 10.2 18.8 13.5 18.8 C16 18.8 18 18 19.5 17 V20.3 C17.8 21.3 15.6 21.8 13 21.8 C6.5 21.8 1.8 18 1.8 12.8 C1.8 8.8 4.5 6 8 5.3 C6.5 6.8 6.3 8.2 6.5 9.5 H14.8 C14.8 6 12.8 3.8 10 3.8 C6.5 3.8 3.2 6.2 1.2 9.5 Z" fill="#1c83e1"/></svg>
<div class="a" style="left:103px;top:766px;width:40px;height:2px;background:#7aace6"></div>
<!-- IE -->
<svg style="left:161px;top:736px" width="23" height="23"><path d="M3 11.5 C3 6.8 6.8 3.5 11.5 3.5 C16.2 3.5 19.5 6.8 19.5 11.5 V12.8 H8 C8.3 15.5 10 17 12.3 17 C14 17 15.5 16.2 16.3 15 H19.2 C18 18.2 15.3 20 12 20 C7 20 3 16.5 3 11.5 Z M8 9.6 H15.2 C14.9 7.6 13.5 6.4 11.6 6.4 C9.8 6.4 8.4 7.6 8 9.6 Z" fill="#2aa2e8"/><path d="M1.2 21 C-1 17 6 8 13 4 C19 0.8 22.5 0.5 22 3 C21.8 4 21 5.5 20 7 C21 4.5 20.5 2.8 17.5 3.5 C12 5 4 13 3 18 C2.5 20.5 4 21.5 7 20.5 C4.5 22 2 22.2 1.2 21 Z" fill="#f4c21b"/></svg>
<!-- explorer -->
<svg style="left:210px;top:738px" width="22" height="19"><path d="M0.5 2 Q0.5 0.5 2 0.5 H8 L10 2.5 H20.5 Q21.5 2.5 21.5 3.5 V18.5 H0.5 Z" fill="#f5d97f"/><path d="M0.5 5 H21.5 V18.5 H0.5 Z" fill="#fbe29a"/><rect x="1.5" y="1" width="6" height="1.8" fill="#fff8d8"/><path d="M4 18.5 V10 H18 V18.5 H15 V13 H7 V18.5 Z" fill="#2a9be5"/></svg>
<div class="a" style="left:201px;top:766px;width:40px;height:2px;background:#7aace6"></div>
<!-- settings -->
<svg style="left:261px;top:738px" width="18" height="18"><path d="M14.99 6.75 L17.39 7.12 L17.39 10.88 L14.99 11.25 L14.83 11.64 L16.26 13.61 L13.61 16.26 L11.64 14.83 L11.25 14.99 L10.88 17.39 L7.12 17.39 L6.75 14.99 L6.36 14.83 L4.39 16.26 L1.74 13.61 L3.17 11.64 L3.01 11.25 L0.61 10.88 L0.61 7.12 L3.01 6.75 L3.17 6.36 L1.74 4.39 L4.39 1.74 L6.36 3.17 L6.75 3.01 L7.12 0.61 L10.88 0.61 L11.25 3.01 L11.64 3.17 L13.61 1.74 L16.26 4.39 L14.83 6.36 Z M13 9 A4 4 0 1 0 5 9 A4 4 0 1 0 13 9 Z" fill="#fff" fill-rule="evenodd"/></svg>
<div class="a" style="left:250px;top:766px;width:40px;height:2px;background:#7aace6"></div>
<!-- mail -->
<svg style="left:306px;top:737px" width="36" height="28"><path d="M1 7 L13 0.6 L25 7 V20 H1 Z" fill="#fff"/><path d="M2 7.3 H24 L13 14.5 Z" fill="#2f2811"/><circle cx="25" cy="18.5" r="8" fill="#333" stroke="#8a8a8a" stroke-width="1"/><text x="25" y="22.6" font-family="Liberation Sans" font-size="11.5" font-weight="bold" fill="#fff" text-anchor="middle" letter-spacing="-1.2">11</text></svg>
<!-- cmd (hover) -->
<div class="a" style="left:344px;top:728px;width:48px;height:40px;background:#4b4327"></div>
<svg style="left:356px;top:738px" width="23" height="20"><rect x="0.5" y="0.5" width="22" height="18" fill="#000" stroke="#b9c2cf" stroke-width="1"/><rect x="1" y="1" width="21" height="1.6" fill="#c9d0da"/><path d="M1 3 H22 V8 Q11 6 1 11 Z" fill="#2a2a2a"/><text x="2.5" y="9" font-family="Liberation Mono" font-size="6.5" fill="#e0e0e0">C:\</text><rect x="12.5" y="7.8" width="7" height="1.2" fill="#e0e0e0"/></svg>
<!-- control panel -->
<svg style="left:405px;top:738px" width="24" height="21"><rect x="0" y="0.5" width="24" height="16" rx="1" fill="#4a98dd"/><rect x="0.8" y="1.3" width="22.4" height="14.4" fill="#5aa7e6"/><circle cx="6" cy="6" r="3.5" fill="none" stroke="#e7f3ff" stroke-width="1.1"/><path d="M6 2.5 A3.5 3.5 0 0 1 9.5 6 H6 Z" fill="#f8a21c"/><rect x="12" y="3.5" width="9" height="2.5" fill="none" stroke="#e7f3ff" stroke-width="0.9"/><rect x="12" y="8" width="9" height="2.5" fill="none" stroke="#e7f3ff" stroke-width="0.9"/><circle cx="4" cy="12" r="0.9" fill="#fff"/><circle cx="7" cy="12" r="0.9" fill="#f8a21c"/><ellipse cx="12" cy="17.5" rx="5" ry="3.3" fill="#d0d0d0"/></svg>
<!-- word -->
<svg style="left:454px;top:736px" width="22" height="23"><path d="M2 1 H17.5 L21.5 5 V21.5 H2 Z" fill="#fff" stroke="#2f6ad0" stroke-width="1"/><path d="M2 1 H17.5 L21.5 5 V12 L2 14 Z" fill="#b6d0f5"/><text x="2.5" y="15.5" font-family="Liberation Sans" font-size="13" font-weight="bold" fill="#1a47b0" transform="scale(1 1)">W</text><path d="M14 15 L21 13 V19 L16 20 Z" fill="#dde9f8" stroke="#9bb8e3" stroke-width="0.6"/></svg>
<!-- outlook -->
<svg style="left:503px;top:736px" width="23" height="23"><path d="M1.5 1 H18 L22 5 V21.5 H1.5 Z" fill="#fbc54a" stroke="#d98b13" stroke-width="1"/><path d="M1.5 1 H18 L22 5 V11 L1.5 13 Z" fill="#fde08d"/><ellipse cx="8" cy="11" rx="4" ry="5.5" fill="none" stroke="#e9761a" stroke-width="2.8"/><circle cx="18.5" cy="10.5" r="3.2" fill="#fff" stroke="#d98b13" stroke-width="0.8"/><path d="M7 17 L21 13 V21 H6 Z" fill="#fff4d0" opacity="0.8"/></svg>
<!-- publisher -->
<svg style="left:552px;top:736px" width="22" height="23"><path d="M1.5 1 H18 L21.5 5 V21.5 H1.5 Z" fill="#d3f0ec" stroke="#1f9b8c" stroke-width="1"/><path d="M1.5 1 H18 L21.5 5 V10 L1.5 13 Z" fill="#7cd2c5"/><text x="3.5" y="15" font-family="Liberation Sans" font-size="13" font-weight="bold" fill="#0b7566">P</text><path d="M10 14 L18 10 L21 17 L13 20 Z" fill="#b5e6df" stroke="#46b2a3" stroke-width="0.8"/></svg>
<!-- excel -->
<svg style="left:601px;top:736px" width="22" height="23"><path d="M1.5 1 H18 L21.5 5 V21.5 H1.5 Z" fill="#e6f2e0" stroke="#1f7a36" stroke-width="1"/><path d="M1.5 1 H18 L21.5 5 V10 L1.5 13 Z" fill="#8fcf8e"/><text x="3" y="15" font-family="Liberation Sans" font-size="13" font-weight="bold" fill="#1f7a34">X</text><path d="M9 14 L20 12 V19 L11 20 Z" fill="#fff" stroke="#6ab26f" stroke-width="0.8"/></svg>
<!-- groove -->
<svg style="left:650px;top:736px" width="25" height="25"><path d="M18.6 3 A10.3 10.3 0 1 0 22.6 9.5" fill="none" stroke="#fff" stroke-width="2.1"/><circle cx="12" cy="12" r="4.2" fill="none" stroke="#fff" stroke-width="2.1"/><path d="M20 8 V3.5" stroke="#fff" stroke-width="2"/></svg>
<div class="a" style="left:642px;top:766px;width:40px;height:2px;background:#7aace6"></div>
<!-- monitor -->
<svg style="left:700px;top:736px" width="22" height="24"><path d="M1 1.5 L20.5 3 V16 L1 15 Z" fill="#2d49c9" stroke="#b8b8b8" stroke-width="1"/><path d="M3 3.5 L18.5 4.7 V14 L3 13 Z" fill="#c5d7f5"/><path d="M5.5 8.5 L8 11 L12 5.5" fill="none" stroke="#1b52c8" stroke-width="1.4"/><path d="M12.5 10 h4" stroke="#6f8fd8" stroke-width="1"/><ellipse cx="10.5" cy="20.5" rx="5.5" ry="2.8" fill="#cfcfcf"/><rect x="9" y="15.5" width="3" height="3" fill="#bdbdbd"/></svg>
<!-- sticky -->
<svg style="left:751px;top:739px" width="18" height="18"><path d="M0 0 H18 V11 L11 18 H0 Z" fill="#fff"/><path d="M11.5 18 L18 11.5 V18 Z" fill="#fff"/><path d="M10 10 H18 L10 18 Z" fill="#2f2811"/></svg>

<!-- tray -->
<svg style="left:1011px;top:740px" width="16" height="16"><circle cx="10.5" cy="3.5" r="2.8" fill="none" stroke="#fff" stroke-width="1.1"/><path d="M6.5 10 Q7.5 6.8 10.5 6.8 Q14.3 6.8 15.3 11" fill="none" stroke="#fff" stroke-width="1.1"/><circle cx="5" cy="8.5" r="2.8" fill="#2f2811" stroke="#fff" stroke-width="1.1"/><path d="M0.6 15.5 Q1.5 11.8 5 11.8 Q8.5 11.8 9.4 15.5" fill="none" stroke="#fff" stroke-width="1.1"/></svg>
<svg style="left:1049px;top:744px" width="13" height="8"><polyline points="0.5,7 6.5,1 12.5,7" fill="none" stroke="#fff" stroke-width="1.2"/></svg>
<svg style="left:1071px;top:741px" width="16" height="16"><path d="M0.5 10 Q0.5 2 8 1.5 Q15.5 2 15.5 10 Z" fill="#2c7be0"/><rect x="5.8" y="5" width="4.4" height="5" fill="#f7c21d"/><path d="M0.5 10 Q8 16 15.5 10 Q8 13.5 0.5 10 Z" fill="#c9c9c9"/></svg>
<svg style="left:1094px;top:741px" width="18" height="12"><path d="M3.2 11.2 Q0.4 11.2 0.4 8.6 Q0.4 6 3.4 6 Q4.2 3.2 7 3.2 Q8 1 10.8 1 Q14.2 1 14.6 4.6 Q17.6 4.8 17.6 8 Q17.6 11.2 14.4 11.2 Z" fill="#fff"/></svg>
<svg style="left:1118px;top:740px" width="15" height="16"><rect x="6" y="0.5" width="8.5" height="8" fill="#4b4f9e" stroke="#8f95d8" stroke-width="0.8"/><rect x="0.5" y="4.5" width="8.5" height="8" fill="#3e4290" stroke="#8f95d8" stroke-width="0.8"/><ellipse cx="4.5" cy="14.2" rx="3.5" ry="1.6" fill="#a5a9e0"/><ellipse cx="10.8" cy="10.3" rx="3" ry="1.3" fill="#a5a9e0"/></svg>
<svg style="left:1143px;top:742px" width="17" height="12"><path d="M1.3 0.5 V3 M4 0.5 V3 M0.5 3 H4.8 V5.5 Q4.8 7 2.7 7 Q0.5 7 0.5 5.5 Z M2.7 7 V11.5" fill="none" stroke="#fff" stroke-width="1"/><rect x="5.5" y="2.5" width="10" height="7.5" fill="none" stroke="#fff" stroke-width="1.1"/><rect x="15.5" y="4.5" width="1.4" height="3.5" fill="#fff"/><rect x="7" y="4" width="7" height="4.5" fill="#fff"/></svg>
<svg style="left:1167px;top:742px" width="17" height="14"><rect x="3.5" y="0.5" width="13" height="9" fill="none" stroke="#fff" stroke-width="1.1"/><path d="M10 9.5 V12.5 M6 13 H14 M0.6 2 V13.5" fill="none" stroke="#fff" stroke-width="1.1"/><rect x="0" y="1" width="5" height="4" fill="#2f2811" stroke="#fff" stroke-width="0.9"/><path d="M1.2 2.6 L2.5 4 L3.8 2.6" fill="none" stroke="#fff" stroke-width="0.7"/></svg>
<svg style="left:1191px;top:741px" width="17" height="15"><path d="M0.6 5 H3.5 L8 1 V14 L3.5 10 H0.6 Z" fill="none" stroke="#fff" stroke-width="1.1"/><path d="M10.5 5 Q12 7.5 10.5 10 M12.8 3 Q15.3 7.5 12.8 12" fill="none" stroke="#fff" stroke-width="1.1"/><path d="M14.8 1 Q18.5 7.5 14.8 14" fill="none" stroke="#9a9a9a" stroke-width="1"/></svg>
<svg style="left:1215px;top:741px" width="24" height="14"><rect x="0.6" y="0.6" width="22.8" height="12.8" rx="1" fill="none" stroke="#fff" stroke-width="1.2"/><path d="M3 4 H21 M3 6.8 H21 M5 9.8 H19" stroke="#fff" stroke-width="1" stroke-dasharray="1.2 0.9"/></svg>
<div class="t" style="left:1264px;top:733px;font-size:12px;letter-spacing:-0.3px;color:#eee">20:17</div>
<div class="t" style="left:1249px;top:751px;font-size:12px;letter-spacing:-0.2px;color:#eee">08/09/2018</div>
<svg style="left:1325px;top:739px" width="25" height="26"><path d="M0.5 0.5 H16 V12 H6 L3.5 15 V12 H0.5 Z" fill="#fff"/><path d="M3 3.5 H13 M3 6.2 H13 M3 9 H10" stroke="#2f2811" stroke-width="1"/><circle cx="15.5" cy="16" r="8" fill="#3a3a3a" stroke="#666" stroke-width="1"/><text x="15.5" y="20.3" font-family="Liberation Sans" font-size="11.5" font-weight="bold" fill="#fff" text-anchor="middle">4</text></svg>
<div class="a" style="left:1361px;top:728px;width:1px;height:40px;background:#8a8775"></div>

</body></html>
